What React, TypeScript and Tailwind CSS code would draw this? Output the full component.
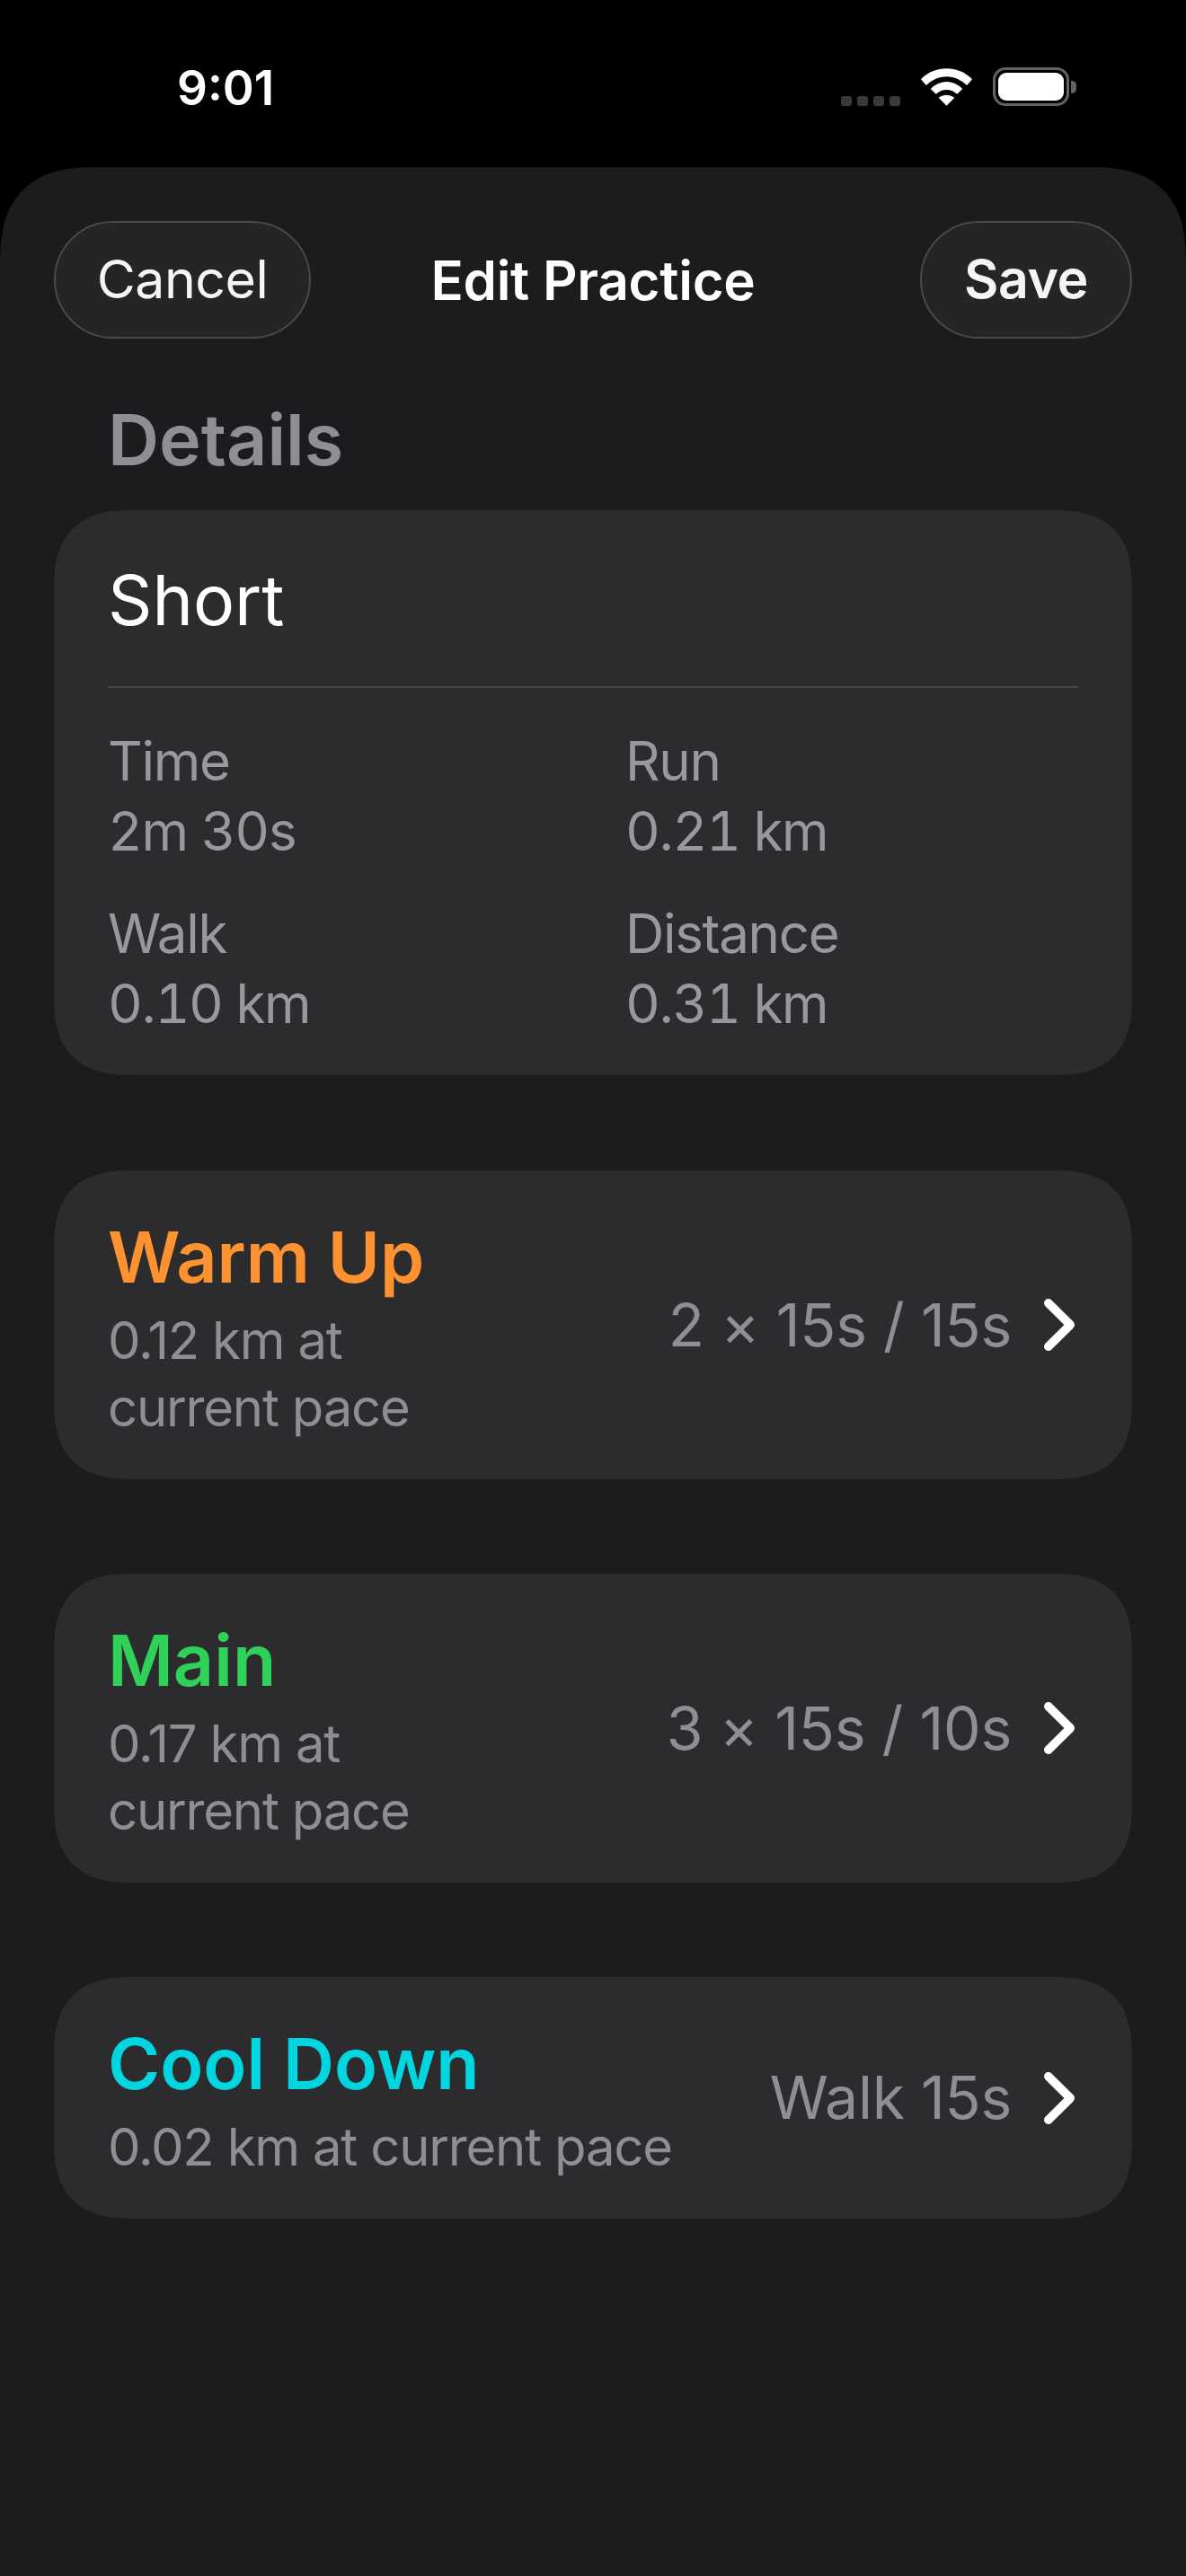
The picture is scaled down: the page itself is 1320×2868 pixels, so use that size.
import React from 'react';

const Chevron = () => (
  <svg width="34" height="58" viewBox="0 0 34 58" fill="none" className="mr-[4px] shrink-0">
    <path d="M4.75 4.75 L29.25 29 L4.75 53.25" stroke="#ffffff" strokeWidth="9.5" strokeLinecap="round" strokeLinejoin="round" />
  </svg>
);

const Stat = ({ label, value }: { label: string; value: string }) => (
  <div className="text-[60px] leading-[78px] tracking-[-1.3px] tabular-nums text-[#98989d]">
    <div>{label}</div>
    <div>{value}</div>
  </div>
);

const SegmentCard = ({ title, color, sub, right, tall }: any) => (
  <div className={`flex items-center justify-between rounded-[90px] bg-[#2c2c2e] px-[60px] [corner-shape:superellipse(1.4)] ${tall ? 'h-[344px]' : 'h-[269px]'}`}>
    <div>
      <div className={`text-[79px] leading-[108px] font-semibold ${color}`}>{title}</div>
      <div className="mt-[2px] text-[58px] leading-[75px] tracking-[-1.2px] text-[#8e8e93]">
        {sub.map((s: string) => <div key={s}>{s}</div>)}
      </div>
    </div>
    <div className="flex items-center gap-[36px]">
      <span className="text-[66px] tracking-[-0.25px] text-[#8e8e93]">{right}</span>
      <Chevron />
    </div>
  </div>
);

export default function App() {
  return (
    <div className="h-[2868px] w-[1320px] overflow-hidden bg-black font-['Inter',sans-serif] antialiased">
      <div className="flex h-[186px] items-start justify-between pl-[197px] pr-[122px] pt-[62px]">
        <span className="text-[53px] leading-[72px] font-semibold text-white">9:01</span>
        <div className="flex items-end gap-[23px] pt-[13px]">
          <div className="flex gap-[6px]">
            <div className="h-[11px] w-[12px] rounded-[3px] bg-[#3a3a3c]" />
            <div className="h-[11px] w-[12px] rounded-[3px] bg-[#3a3a3c]" />
            <div className="h-[11px] w-[12px] rounded-[3px] bg-[#3a3a3c]" />
            <div className="h-[11px] w-[12px] rounded-[3px] bg-[#3a3a3c]" />
          </div>
          <svg width="57" height="42" viewBox="0 0 58 42">
            <path d="M29 0 C40 0 50 4 58 12 L52 19 C46 13 38 9 29 9 C20 9 12 13 6 19 L0 12 C8 4 18 0 29 0 Z" fill="#fff" />
            <path d="M29 15 C35 15 42 18 47 23 L41 29 C38 26 34 24 29 24 C24 24 20 26 17 29 L11 23 C16 18 23 15 29 15 Z" fill="#fff" />
            <path d="M29 30 C32 30 35 31 38 33 L29 42 L20 33 C23 31 26 30 29 30 Z" fill="#fff" />
          </svg>
          <div className="flex items-center">
            <div className="h-[43px] w-[85px] rounded-[14px] border-[3px] border-[#636366] p-[3px]">
              <div className="h-full w-full rounded-[9px] bg-white" />
            </div>
            <div className="ml-[2px] h-[14px] w-[6px] rounded-r-[5px] bg-[#636366]" />
          </div>
        </div>
      </div>

      <div className="h-[2682px] rounded-t-[110px] bg-[#1c1c1e] px-[60px] pt-[60px] [corner-shape:superellipse(1.4)]">
        <div className="grid h-[131px] grid-cols-[1fr_auto_1fr] items-center">
          <button className="flex h-[131px] w-[286px] items-center justify-center rounded-full border-[2px] border-[#4a4a4c] bg-[#252527] text-[59px] tracking-[-0.5px] text-[#f5f5f5]">Cancel</button>
          <div className="text-[60px] font-semibold tracking-[-0.25px] text-white">Edit Practice</div>
          <button className="flex h-[131px] w-[236px] items-center justify-center justify-self-end rounded-full border-[2px] border-[#4a4a4c] bg-[#252527] text-[59px] font-semibold tracking-[-0.4px] text-[#f5f5f5]">Save</button>
        </div>

        <div className="mt-[67px] pl-[60px] text-[79px] leading-[90px] font-semibold text-[#8e8e93]">Details</div>

        <div className="mt-[34px] h-[629px] rounded-[90px] bg-[#2c2c2e] px-[60px] pt-[50px] [corner-shape:superellipse(1.4)]">
          <div className="text-[77px] leading-[100px] text-white">Short</div>
          <div className="mt-[46px] h-[2px] bg-[#48484a]" />
          <div className="mt-[42px] grid grid-cols-[576px_1fr] gap-y-[36px]">
            <Stat label="Time" value="2m 30s" />
            <Stat label="Run" value="0.21 km" />
            <Stat label="Walk" value="0.10 km" />
            <Stat label="Distance" value="0.31 km" />
          </div>
        </div>

        <div className="mt-[106px] flex flex-col gap-[105px]">
          <SegmentCard title="Warm Up" color="text-[#ff9230]" sub={['0.12 km at', 'current pace']} right="2 × 15s / 15s" tall />
          <SegmentCard title="Main" color="text-[#30d158]" sub={['0.17 km at', 'current pace']} right="3 × 15s / 10s" tall />
          <SegmentCard title="Cool Down" color="text-[#00d5e0]" sub={['0.02 km at current pace']} right="Walk 15s" />
        </div>
      </div>
    </div>
  );
}
